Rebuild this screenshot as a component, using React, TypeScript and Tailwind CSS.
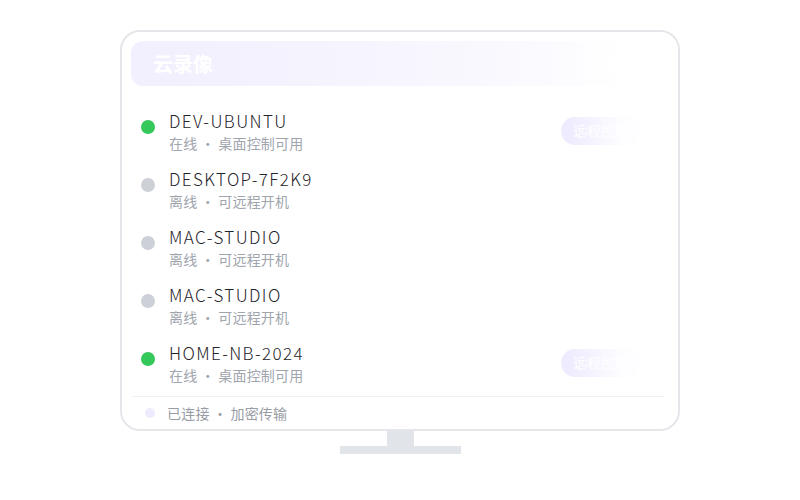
import React from "react";

type Device = {
  name: string;
  online: boolean;
};

const devices: Device[] = [
  { name: "DEV-UBUNTU", online: true },
  { name: "DESKTOP-7F2K9", online: false },
  { name: "MAC-STUDIO", online: false },
  { name: "MAC-STUDIO", online: false },
  { name: "HOME-NB-2024", online: true },
];

const DeviceRow = ({ device }: { device: Device }) => {
  return (
    <div className="flex h-[58px] items-start pl-[10px]">
      <div className={`mt-[16px] h-[14px] w-[14px] shrink-0 rounded-full ${device.online ? "bg-[#34c759]" : "bg-[#cdd1d7]"}`} />
      <div className="ml-[14px] pt-[6px]">
        <p className="text-[17px] font-light leading-[22px] tracking-[1.4px] text-[#1f242b]">{device.name}</p>
        <p className="text-[14px] leading-[22px] tracking-[0.2px] text-[#a0a5ad]">
          {device.online ? "在线 · 桌面控制可用" : "离线 · 可远程开机"}
        </p>
      </div>
      {device.online && (
        <div className="ml-auto mr-[26px] mt-[13px] flex h-[28px] w-[80px] items-center rounded-full bg-[#efebfe] pl-[12px] font-serif text-[14px] text-white">
          远程控制
        </div>
      )}
    </div>
  );
};

export default function App() {
  return (
    <div
      className="flex h-[500px] w-[800px] flex-col items-center bg-white pt-[30px]"
      style={{ fontFamily: '"Noto Sans CJK SC", "Noto Sans", sans-serif' }}
    >
      <div className="relative h-[401px] w-[560px] overflow-hidden rounded-[20px] border-2 border-[#e4e6ea] bg-white">
        <div className="flex h-full flex-col pl-[9px] pr-[11px] pt-[9px]">
          <div className="flex h-[45px] shrink-0 items-center justify-between rounded-[12px] bg-gradient-to-r from-[#f2effe] via-[#f7f5fe] to-white pl-[22px] pr-[24px]">
            <span className="text-[20px] font-bold text-white">云录像</span>
            <div className="flex gap-[6px]">
              <span className="h-[8px] w-[8px] rounded-full bg-white" />
              <span className="h-[8px] w-[8px] rounded-full bg-white" />
              <span className="h-[8px] w-[8px] rounded-full bg-white" />
            </div>
          </div>

          <div className="mt-[18px] flex flex-col">
            {devices.map((d, i) => (
              <DeviceRow key={i} device={d} />
            ))}
          </div>

          <div className="mx-[2px] mt-[2px] h-px bg-[#eef0f3]" />

          <div className="flex h-[32px] items-center pl-[14px]">
            <span className="h-[10px] w-[10px] rounded-full bg-[#efebfe]" />
            <span className="ml-[12px] text-[14px] tracking-[0.2px] text-[#979ca5]">已连接 · 加密传输</span>
          </div>
        </div>

        {/* fade on the right side */}
        <div className="pointer-events-none absolute right-0 top-0 h-[360px] w-[110px] bg-gradient-to-r from-transparent via-white/90 to-white" />
      </div>

      <div className="h-[15px] w-[27px] bg-[#e1e5ea]" />
      <div className="h-[8px] w-[121px] bg-[#e1e5ea]" />
    </div>
  );
}
